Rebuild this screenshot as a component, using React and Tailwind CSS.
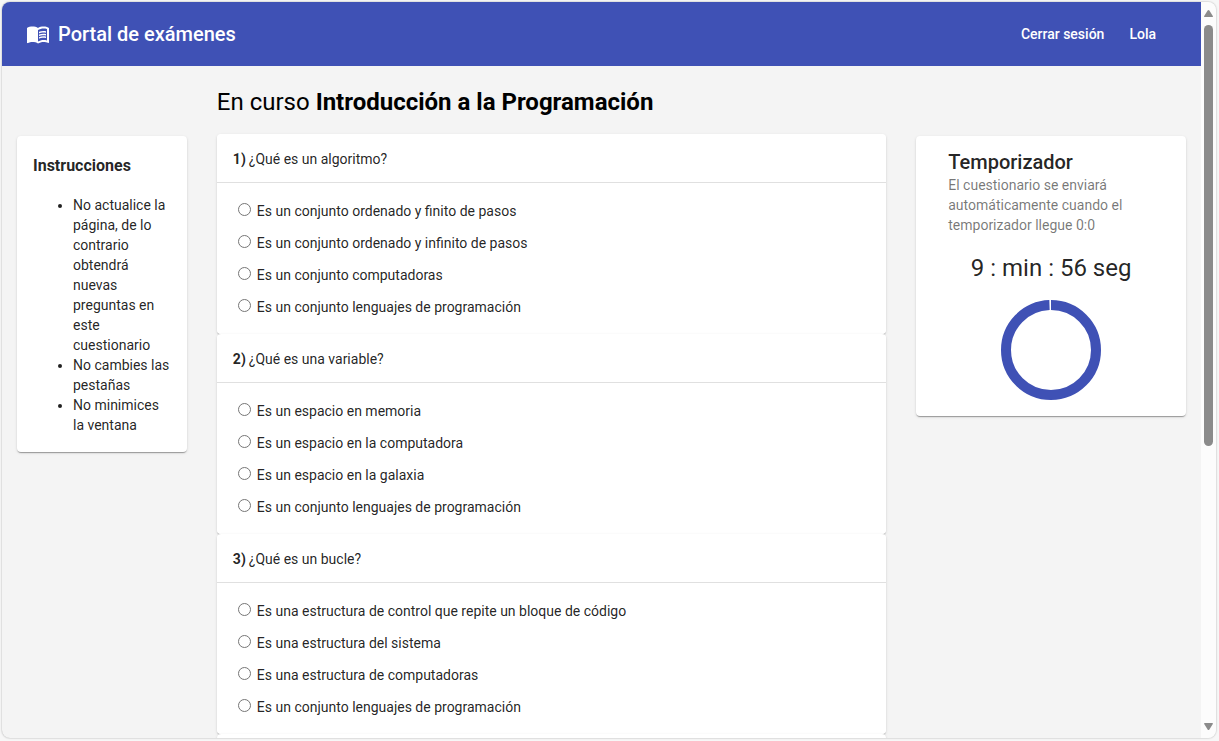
import React from "react";
import { MdMenuBook } from "react-icons/md";

const CARD =
  "rounded bg-white shadow-[0_2px_1px_-1px_rgba(0,0,0,0.2),0_1px_1px_0_rgba(0,0,0,0.14),0_1px_3px_0_rgba(0,0,0,0.12)]";

const instructions = [
  "No actualice la página, de lo contrario obtendrá nuevas preguntas en este cuestionario",
  "No cambies las pestañas",
  "No minimices la ventana",
];

const questions = [
  {
    text: "¿Qué es un algoritmo?",
    options: [
      "Es un conjunto ordenado y finito de pasos",
      "Es un conjunto ordenado y infinito de pasos",
      "Es un conjunto computadoras",
      "Es un conjunto lenguajes de programación",
    ],
  },
  {
    text: "¿Qué es una variable?",
    options: [
      "Es un espacio en memoria",
      "Es un espacio en la computadora",
      "Es un espacio en la galaxia",
      "Es un conjunto lenguajes de programación",
    ],
  },
  {
    text: "¿Qué es un bucle?",
    options: [
      "Es una estructura de control que repite un bloque de código",
      "Es una estructura del sistema",
      "Es una estructura de computadoras",
      "Es un conjunto lenguajes de programación",
    ],
  },
];

function Toolbar() {
  return (
    <header className="flex h-16 shrink-0 items-center bg-[#3f51b5] px-6 text-white">
      <a href="#inicio" className="flex items-center gap-2 text-xl font-medium">
        <MdMenuBook className="size-6" />
        Portal de exámenes
      </a>
      <nav className="ml-auto flex items-center gap-[25px] pr-[21px] text-sm font-medium">
        <button type="button">Cerrar sesión</button>
        <a href="#perfil">Lola</a>
      </nav>
    </header>
  );
}

function Instructions() {
  return (
    <aside className="w-1/6 shrink-0 px-[15px] pt-[70px]">
      <div className={`${CARD} px-4 pt-4 pb-[17px]`}>
        <h2 className="mb-[15px] text-base leading-7 font-bold">Instrucciones</h2>
        <ul className="list-disc pl-10">
          {instructions.map((item) => (
            <li key={item}>{item}</li>
          ))}
        </ul>
      </div>
    </aside>
  );
}

function Question({ number, text, options }) {
  return (
    <fieldset className={`${CARD} min-w-0`}>
      <legend className="float-left flex w-full gap-[3px] px-4 pt-[15px] pb-[13px]">
        <b>{number})</b>
        {text}
      </legend>
      <div className="clear-both border-t border-[#e0e0e0] px-[21px] pt-3 pb-[11px]">
        {options.map((option) => (
          <label key={option} className="flex h-8 items-center gap-1.5">
            <input
              type="radio"
              name={`pregunta-${number}`}
              value={option}
              className="mb-[3px] size-[13px] appearance-none rounded-full border border-[#767676] bg-white checked:border-4 checked:border-[#3f51b5]"
            />
            {option}
          </label>
        ))}
      </div>
    </fieldset>
  );
}

function Timer() {
  return (
    <aside className="w-1/4 shrink-0 px-[15px] pt-[70px]">
      <div className={`${CARD} p-4`}>
        <div className="px-4">
          <h2 className="text-xl leading-5 font-medium">Temporizador</h2>
          <p className="mt-[3px] text-black/54">
            El cuestionario se enviará automáticamente cuando el temporizador llegue 0:0
          </p>
        </div>
        <p className="mt-[17px] mb-4 text-center text-2xl">9 : min : 56 seg</p>
        <svg viewBox="0 0 100 100" className="mx-auto size-[100px]" role="img" aria-label="Tiempo restante">
          <circle
            cx="50"
            cy="50"
            r="45"
            fill="none"
            stroke="#3f51b5"
            strokeWidth="10"
            strokeDasharray="280.74 2"
            transform="rotate(-90 50 50)"
          />
        </svg>
      </div>
    </aside>
  );
}

function ScrollBar() {
  return (
    <div className="flex w-[15px] shrink-0 flex-col items-center bg-[#fcfcfc] py-2">
      <svg viewBox="0 0 9 7" className="h-[7px] w-[9px] shrink-0 fill-[#8b8b8b]">
        <path d="M4.5 0 Q5 0 5.4.6L8.8 5.9Q9.2 7 8.2 7H.8Q-.2 7 .2 5.9L3.6.6Q4 0 4.5 0Z" />
      </svg>
      <div className="my-2 min-h-0 flex-1">
        <div className="h-[61%] w-[9px] rounded-full bg-[#8b8b8b]" />
      </div>
      <svg viewBox="0 0 9 7" className="h-[7px] w-[9px] shrink-0 fill-[#8b8b8b]">
        <path d="M4.5 7Q5 7 5.4 6.4L8.8 1.1Q9.2 0 8.2 0H.8Q-.2 0 .2 1.1L3.6 6.4Q4 7 4.5 7Z" />
      </svg>
    </div>
  );
}

export default function App() {
  return (
    <div className="h-screen bg-[#f7f7f7] pt-0.5 pr-[3px] pb-[3px] pl-0.5 font-[Roboto,sans-serif] text-sm text-black/87">
      <div className="flex h-full overflow-hidden rounded-lg bg-[#f4f4f4] shadow-[0_0_2px_rgba(0,0,0,0.35)]">
        <div className="flex min-w-0 flex-1 flex-col">
          <Toolbar />
          <div className="flex min-h-0 flex-1 overflow-hidden">
            <Instructions />
            <main className="min-w-0 flex-1 px-[15px] pt-5">
              <h1 className="mb-4 text-2xl text-black">
                En curso <b>Introducción a la Programación</b>
              </h1>
              <form>
                {questions.map((question, index) => (
                  <Question key={question.text} number={index + 1} {...question} />
                ))}
                <div className={`${CARD} h-12`} />
              </form>
            </main>
            <Timer />
          </div>
        </div>
        <ScrollBar />
      </div>
    </div>
  );
}
